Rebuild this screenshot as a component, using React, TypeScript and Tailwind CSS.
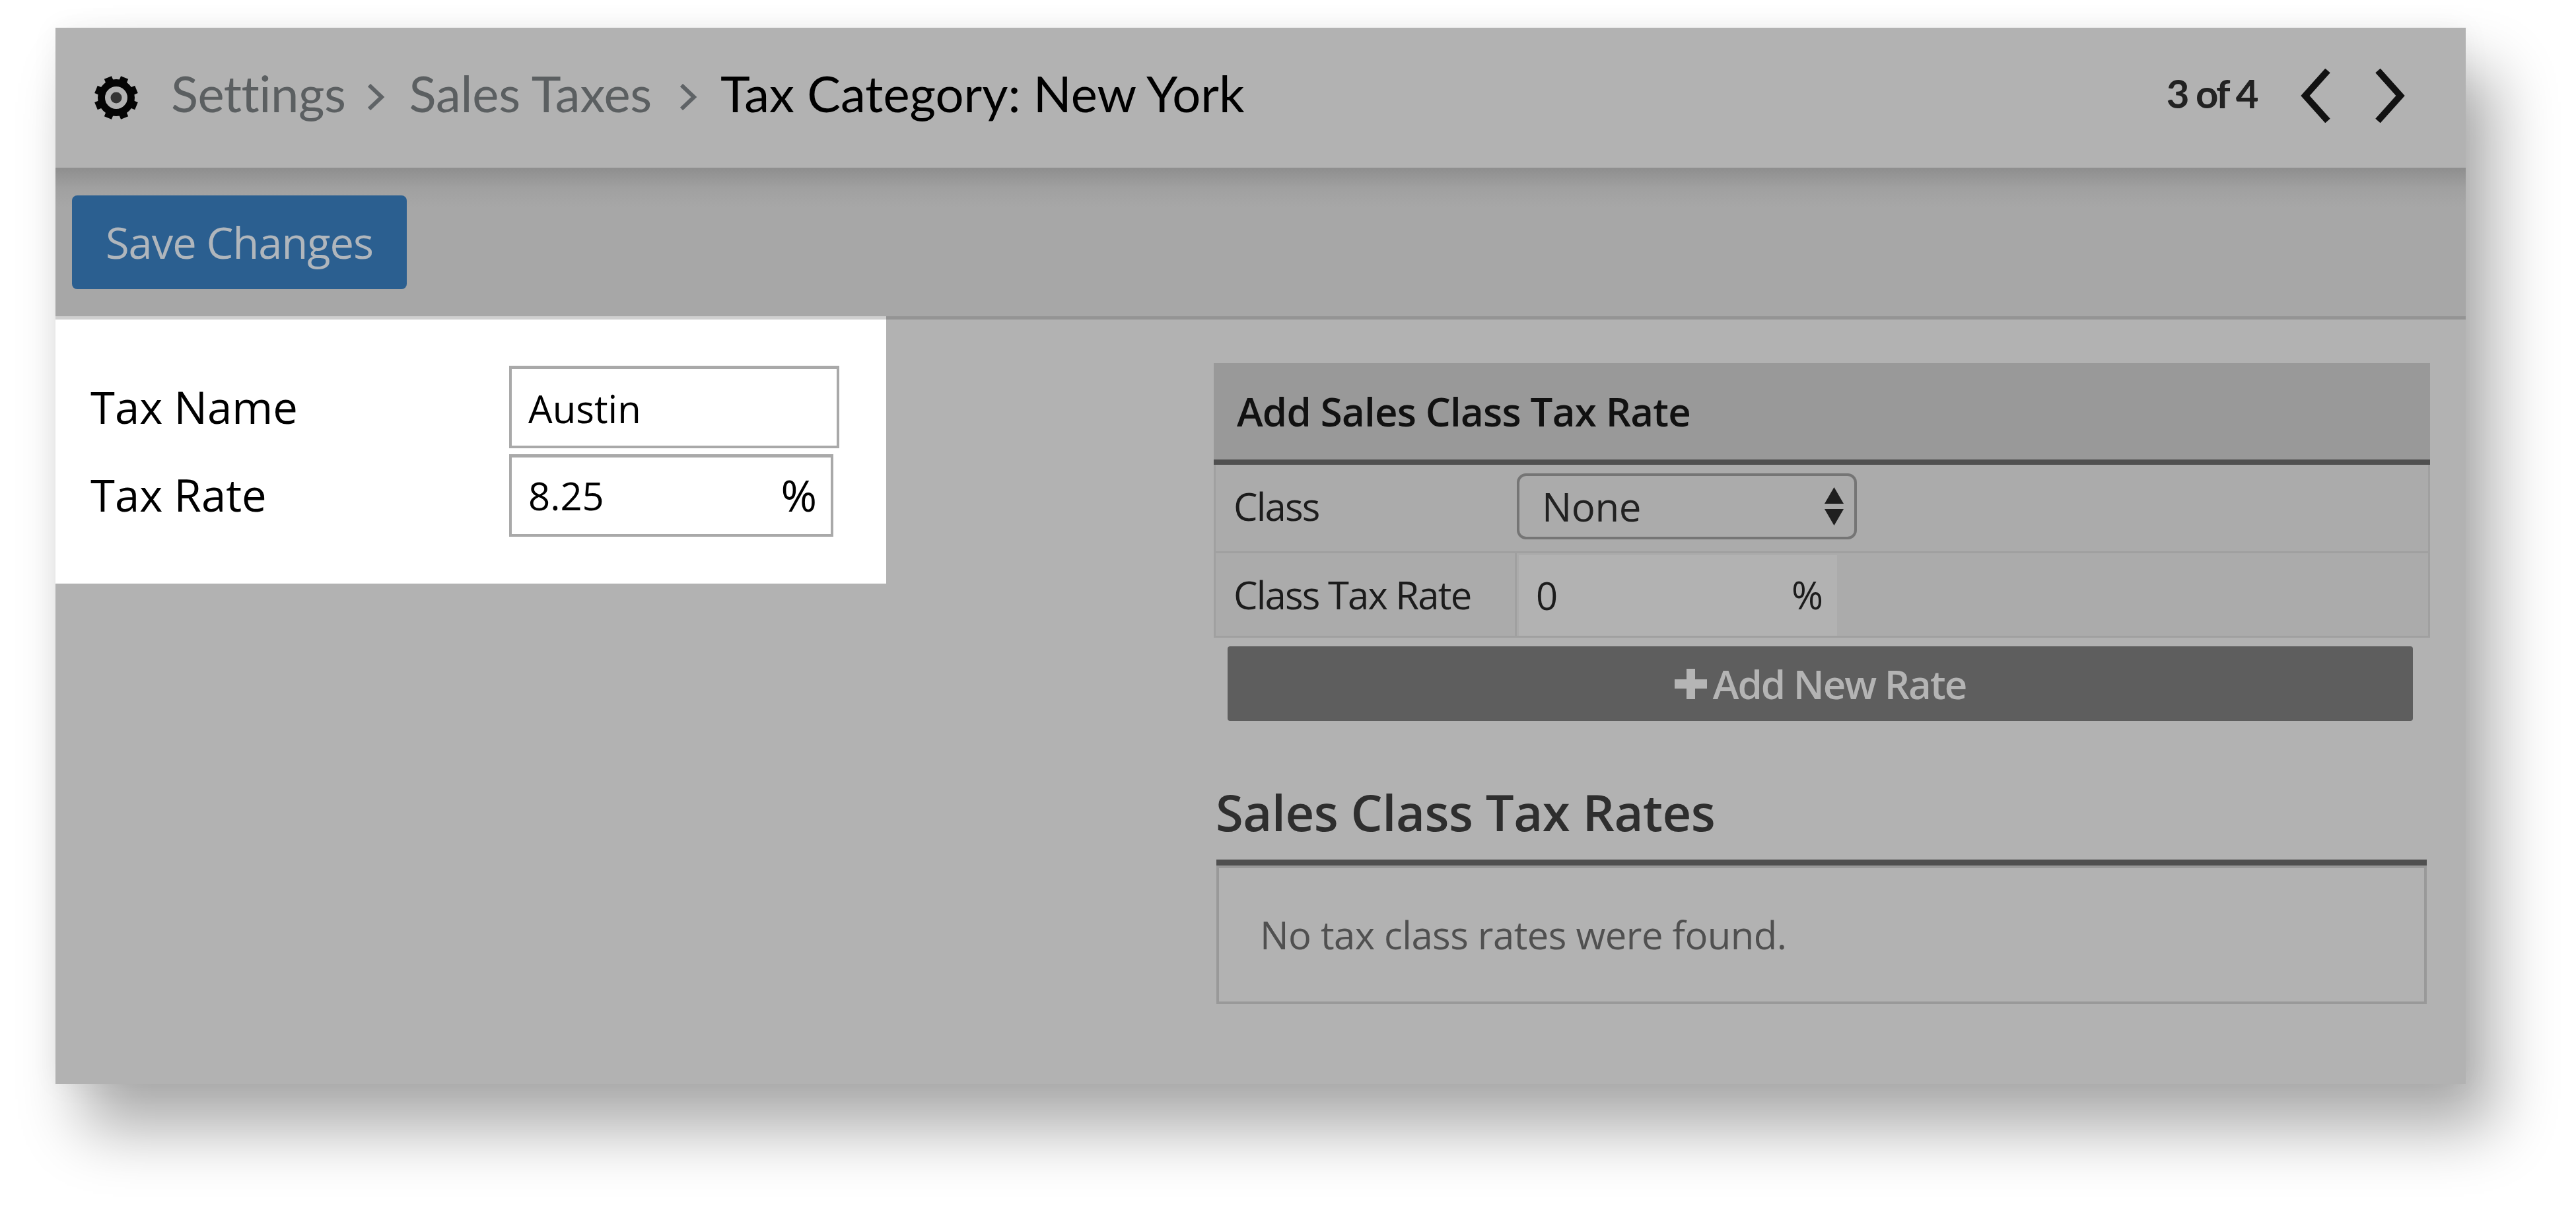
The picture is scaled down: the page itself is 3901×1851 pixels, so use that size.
import React from "react";

const Chev = ({ dir, className }: { dir: "l" | "r"; className: string }) => (
  <svg viewBox="0 0 46 82" className={className} fill="none" stroke="currentColor" strokeWidth="10">
    <path d={dir === "l" ? "M41 3 L7 41 L41 79" : "M5 3 L39 41 L5 79"} />
  </svg>
);

const Crumb = () => (
  <svg viewBox="0 0 28 40" className="w-[28px] h-[40px] text-[#5f6366] shrink-0" fill="none" stroke="currentColor" strokeWidth="6">
    <path d="M4 2 L23 20 L4 38" />
  </svg>
);

const Gear = () => (
  <svg viewBox="-33 -33 66 66" className="w-[66px] h-[66px] shrink-0 text-[#050505]" fill="currentColor">
    {[22.5, 67.5, 112.5, 157.5, 202.5, 247.5, 292.5, 337.5].map((a) => (
      <rect key={a} x="-6" y="-33" width="12" height="12" transform={`rotate(${a})`} />
    ))}
    <circle r="22.5" fill="none" stroke="currentColor" strokeWidth="11" />
    <circle r="8.5" fill="#333333" />
  </svg>
);

export default function App() {
  return (
    <div className="w-[3901px] h-[1851px] bg-white pl-[84px] pt-[42px] overflow-hidden font-['Open_Sans',sans-serif]">
      <div className="w-[3650px] h-[1600px] bg-[#b2b2b2] shadow-[42px_68px_90px_rgba(0,0,0,0.33),0_0_40px_rgba(0,0,0,0.05)] flex flex-col">
        {/* Header */}
        <div className="h-[212px] shrink-0 flex items-center pl-[59px] pr-[92px] font-['Lato',sans-serif]">
          <Gear />
          <span className="ml-[50px] mb-[14px] text-[76px] leading-none text-[#5b5f61] tracking-[-0.5px]">Settings</span>
          <div className="ml-[32px] mb-[2px]"><Crumb /></div>
          <span className="ml-[36px] mb-[14px] text-[76px] leading-none text-[#5b5f61] tracking-[-0.2px]">Sales Taxes</span>
          <div className="ml-[41px] mb-[2px]"><Crumb /></div>
          <span className="ml-[35px] mb-[14px] text-[76px] leading-none text-black">Tax Category: New York</span>
          <span className="ml-auto mb-[14px] text-[60px] leading-none text-[#222] font-bold tracking-[-2.6px]">3 of 4</span>
          <Chev dir="l" className="ml-[66px] mb-[6px] w-[46px] h-[82px] text-[#111]" />
          <Chev dir="r" className="ml-[66px] mb-[6px] w-[46px] h-[82px] text-[#111]" />
        </div>
        {/* Toolbar */}
        <div className="h-[230px] shrink-0 border-b-[5px] border-[#949494] bg-[linear-gradient(#8e8e8e,#a0a0a0_30px,#a7a7a7_60px)] pl-[25px] pt-[42px]">
          <button className="w-[507px] h-[142px] rounded-[8px] bg-[#2b5f90] text-[#b0b6bc] text-[65px] leading-none font-medium tracking-[-1px] flex items-center justify-center">
            Save Changes
          </button>
        </div>
        {/* Main */}
        <div className="flex flex-1 min-h-0">
          <div className="w-[1258px] shrink-0">
            <div className="-mt-[5px] border-t-[5px] border-[#cfcfcf] bg-white h-[405px] pl-[53px] pt-[70px] text-black text-[67px] leading-none">
              <div className="flex items-center h-[125px]">
                <span className="w-[634px] shrink-0">Tax Name</span>
                <div className="w-[500px] h-[125px] border-[4px] border-t-[5px] border-[#a9a9a9] flex items-center pl-[25px] text-[58px] pt-[3px]">Austin</div>
              </div>
              <div className="flex items-center h-[125px] mt-[9px]">
                <span className="w-[634px] mb-[3px] shrink-0">Tax Rate</span>
                <div className="w-[491px] h-[125px] border-[4px] border-t-[5px] border-[#a9a9a9] flex items-center justify-between pl-[25px] pr-[22px] text-[58px]">
                  <span>8.25</span><span className="text-[66px] mb-[4px] tracking-[-1px]">%</span>
                </div>
              </div>
            </div>
          </div>
          <div className="pl-[496px] pt-[66px] w-[2338px]">
            <div className="w-[1842px]">
              <div className="h-[154px] bg-[#999999] border-b-[8px] border-[#505050] flex items-center pl-[35px] text-[60px] leading-none font-semibold tracking-[-0.8px] text-[#111]">
                Add Sales Class Tax Rate
              </div>
              <div className="border-x-[3px] border-b-[3px] border-[#a0a0a0] bg-[#ababab] text-[58px] leading-none text-[#1c1c1c]">
                <div className="h-[134px] flex items-center border-b-[3px] border-[#a0a0a0] pb-[5px]">
                  <span className="w-[456px] pl-[27px] shrink-0 tracking-[-1.8px]">Class</span>
                  <div className="w-[515px] h-[100px] rounded-[14px] border-[4px] border-[#757575] flex items-center justify-between pl-[34px] pr-[16px] text-[60px] tracking-[-0.4px] text-[#222]">
                    <span>None</span>
                    <svg viewBox="0 0 29 58" className="w-[29px] h-[58px] text-[#1f1f1f]" fill="currentColor">
                      <path d="M14.5 0 L29 25 L0 25 Z" />
                      <path d="M14.5 58 L29 33 L0 33 Z" />
                    </svg>
                  </div>
                </div>
                <div className="h-[125px] flex">
                  <div className="w-[456px] pl-[27px] shrink-0 border-r-[3px] border-[#a0a0a0] flex items-center tracking-[-1.8px]">Class Tax Rate</div>
                  <div className="ml-[3px] mt-[3px] w-[482px] bg-[#b2b2b2] flex items-center justify-between pl-[26px] pr-[22px]">
                    <span>0</span><span className="tracking-[-1px] mb-[2px]">%</span>
                  </div>
                </div>
              </div>
              <button className="mt-[13px] ml-[21px] w-[1795px] h-[113px] rounded-[4px] bg-[#5e5e5e] text-[#b4b4b4] text-[60px] leading-none font-semibold tracking-[-2px] flex items-center justify-center gap-[9px]">
                <svg viewBox="0 0 49 46" className="w-[49px] h-[46px] text-[#b5b5b5]" fill="currentColor">
                  <rect x="18" y="0" width="13" height="46" />
                  <rect x="0" y="16" width="49" height="14" />
                </svg>
                <span>Add New Rate</span>
              </button>
              <h2 className="mt-[100px] ml-[3px] text-[76px] leading-none font-semibold tracking-[-0.5px] text-[#2e2e2e]">Sales Class Tax Rates</h2>
              <div className="mt-[34px] ml-[4px] w-[1833px] h-[219px] border-t-[9px] border-[#505050]">
                <div className="h-full border-[4px] border-[#999999] flex items-center pl-[62px] text-[58px] leading-none tracking-[-0.55px] text-[#505050]">
                  No tax class rates were found.
                </div>
              </div>
            </div>
          </div>
        </div>
      </div>
    </div>
  );
}
